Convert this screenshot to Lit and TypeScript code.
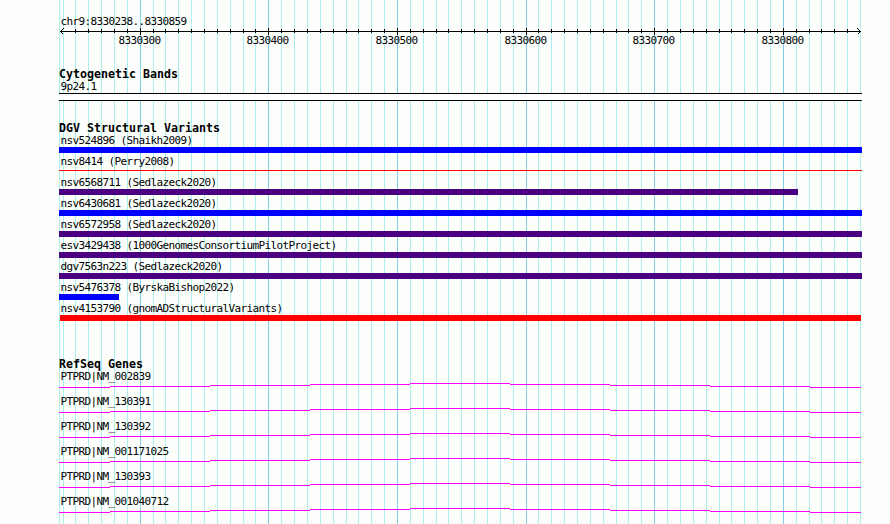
import { LitElement, html, svg, css } from "lit";
import { customElement } from "lit/decorators.js";

const LEFT = 59;
const MAJOR_ORIGIN = 140.225;
const STEP = 800 / 62.2;

interface Line { x: number; major: boolean; }

const lines: Line[] = [];
for (let k = -6; k <= 56; k++) {
  lines.push({ x: Math.floor(MAJOR_ORIGIN + STEP * k), major: k % 10 === 0 });
}

interface Variant { name: string; kind: string; start: number; end: number; }

const variants: Variant[] = [
  { name: "nsv524896 (Shaikh2009)", kind: "blue", start: 59, end: 862 },
  { name: "nsv8414 (Perry2008)", kind: "thin", start: 59, end: 862 },
  { name: "nsv6568711 (Sedlazeck2020)", kind: "indigo", start: 59, end: 798 },
  { name: "nsv6430681 (Sedlazeck2020)", kind: "blue", start: 59, end: 862 },
  { name: "nsv6572958 (Sedlazeck2020)", kind: "indigo", start: 59, end: 862 },
  { name: "esv3429438 (1000GenomesConsortiumPilotProject)", kind: "indigo", start: 59, end: 862 },
  { name: "dgv7563n223 (Sedlazeck2020)", kind: "indigo", start: 59, end: 862 },
  { name: "nsv5476378 (ByrskaBishop2022)", kind: "blue", start: 59, end: 119 },
  { name: "nsv4153790 (gnomADStructuralVariants)", kind: "red", start: 60, end: 861 },
];

const genes = ["NM_002839", "NM_130391", "NM_130392", "NM_001171025", "NM_130393", "NM_001040712"];

// The intron line climbs one pixel at each step and comes back down.
const intron = [
  [0, 51, 4], [51, 151, 3], [151, 251, 2], [251, 351, 1], [351, 451, 0],
  [451, 551, 1], [551, 651, 2], [651, 751, 3], [751, 802, 4],
];

@customElement("app-root")
export class AppRoot extends LitElement {
  static styles = css`
    :host {
      display: block;
      position: relative;
      width: 890px;
      height: 524px;
      overflow: hidden;
      box-sizing: border-box;
      padding: 15px 28px 0 59px;
      background: #fdfffc;
      color: #000;
      font-family: "DejaVu Sans Mono", "Liberation Mono", monospace;
      font-size: 11px;
      letter-spacing: -0.622px;
    }
    svg { display: block; overflow: visible; shape-rendering: crispEdges; }
    .grid { position: absolute; left: 0; top: 0; }
    .minor { fill: #afeeee; }
    .major { fill: #87ceeb; }
    .content { position: relative; display: flex; flex-direction: column; }
    .label { height: 13px; line-height: 13px; padding-left: 1.4px; white-space: nowrap; }
    .title {
      height: 12px;
      line-height: 12px;
      font-size: 11.63px;
      font-weight: bold;
      letter-spacing: 0;
      white-space: nowrap;
    }
    .cytoband {
      height: 8px;
      box-sizing: border-box;
      border-top: 1px solid #000;
      border-bottom: 1px solid #000;
      background: #fff;
    }
    .cyto { margin-top: 20px; width: 803px; }
    .dgv { margin-top: 21px; }
    .refseq { margin-top: 35px; }
    .variant { display: flow-root; height: 21px; }
    .bar { height: 6px; }
    .blue { background: #00f; }
    .indigo { background: #4b0082; }
    .red { background: #f00; }
    .thin { background: #f00; height: 1px; margin-top: 2px; }
    .gene { height: 25px; }
    .intron { fill: #f0f; }
    .arrow { fill: none; stroke: #000; }
  `;

  render() {
    return html`
      <svg class="grid" width="890" height="524">
        <rect class="minor" x="59" y="0" width="1" height="524"></rect>
        ${lines.map((l) => svg`<rect class=${l.major ? "major" : "minor"} x=${l.x} y="0" width="1" height="524"></rect>`)}
      </svg>
      <div class="content">
        <div class="label">chr9:8330238..8330859</div>
        <svg width="803" height="20">
          <rect x="1" y="3" width="801" height="1"></rect>
          <path class="arrow" d="M4.5 .5L1.5 3.5L4.5 6.5M798.5 .5L801.5 3.5L798.5 6.5"></path>
          ${lines.filter((l) => l.x > 63 && l.x < 860).map((l) => svg`
            <rect x=${l.x - LEFT} y=${l.major ? 0 : 1} width="1" height=${l.major ? 7 : 4}></rect>`)}
          ${lines.filter((l) => l.major).map((l, i) => svg`
            <text x=${l.x - LEFT - 21.5} y="16">${8330300 + i * 100}</text>`)}
        </svg>
        <section class="cyto">
          <div class="title">Cytogenetic Bands</div>
          <div class="label">9p24.1</div>
          <div class="cytoband"></div>
        </section>
        <section class="dgv">
          <div class="title">DGV Structural Variants</div>
          ${variants.map((v) => html`<div class="variant"><div class="label">${v.name}</div><div class="bar ${v.kind}" style="width:${v.end - v.start}px;margin-left:${v.start - LEFT}px"></div></div>`)}
        </section>
        <section class="refseq">
          <div class="title">RefSeq Genes</div>
          ${genes.map((g) => html`<div class="gene"><div class="label">PTPRD|${g}</div><svg class="intron" width="803" height="5">
            ${intron.map(([a, b, y]) => svg`<rect x=${a} y=${y} width=${b - a} height="1"></rect>`)}</svg></div>`)}
        </section>
      </div>
    `;
  }
}
